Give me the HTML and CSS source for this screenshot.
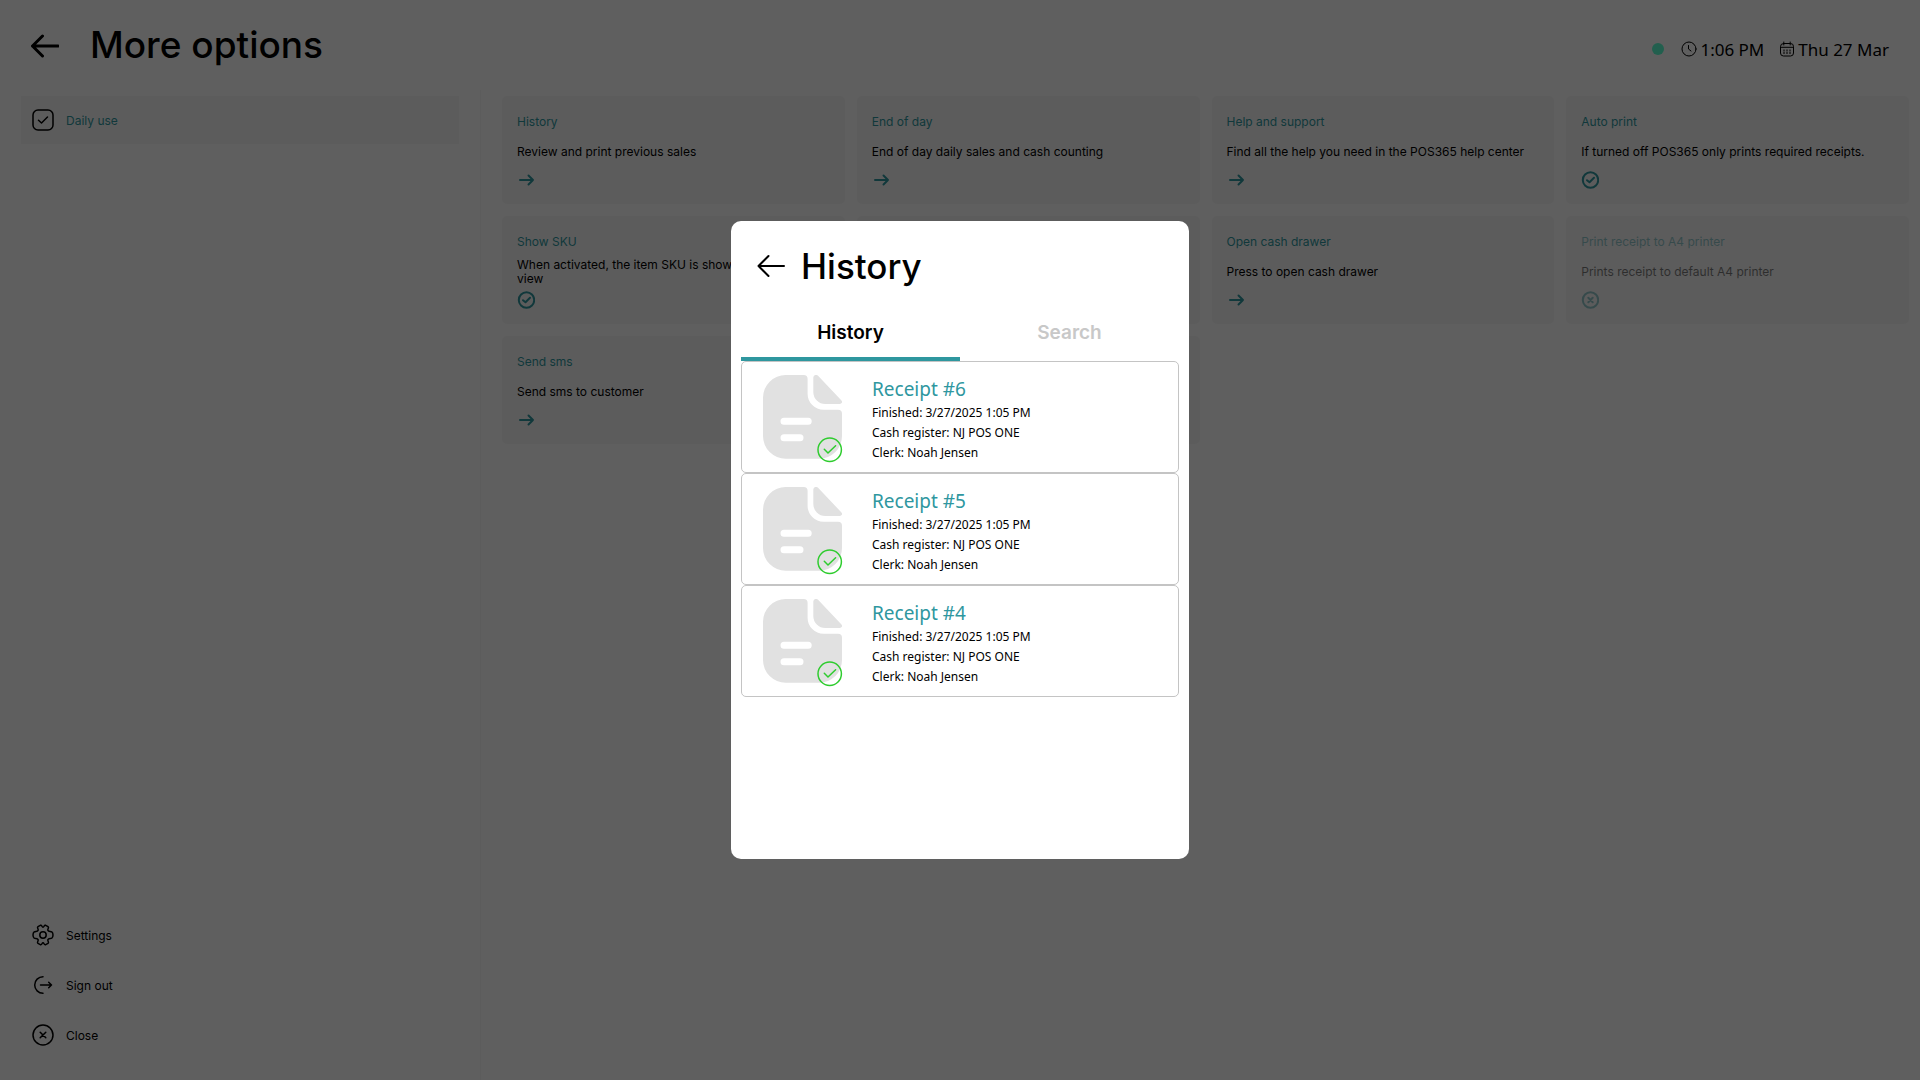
FILE: index.html
```html
<!DOCTYPE html>
<html lang="en">
<head>
    <meta charset="UTF-8">
    <meta name="viewport" content="width=device-width, initial-scale=1.0">
    <title>More options</title>
    <link rel="stylesheet" href="styles.css">
</head>
<body>
    <!-- shared icons -->
    <svg class="sprite" aria-hidden="true">
        <symbol id="back" viewBox="0 0 28 24">
            <path d="M27 12H1.500M11.500 2 1.500 12l10 10"/>
        </symbol>
        <symbol id="arrow" viewBox="0 0 18 18">
            <path d="M3 9h13M11.500 4.500 16 9l-4.500 4.500"/>
        </symbol>
        <symbol id="check" viewBox="0 0 18 18">
            <circle cx="9.500" cy="9" r="7.700"/>
            <path d="M6 9.200 8.500 11.300l4.500-4.500"/>
        </symbol>
        <symbol id="cross" viewBox="0 0 18 18">
            <circle cx="9.500" cy="9" r="7.700"/>
            <path d="M7.300 6.800l4.400 4.400M11.700 6.800l-4.400 4.400"/>
        </symbol>
        <symbol id="receipt" viewBox="0 0 80 88">
            <path class="paper" d="M22.700 0H40.600a4 4 0 0 1 4 4V18.700a16 16 0 0 0 16 16H75a4 4 0 0 1 4 4V61a22.700 22.700 0 0 1-22.700 22.700H22.700A22.700 22.700 0 0 1 0 61V22.700A22.700 22.700 0 0 1 22.700 0z"/>
            <path class="paper" d="M50.300 3c0-3 3-4 5-2L78 25c2 2 1 4-1.500 4H62.300a12 12 0 0 1-12-12z"/>
            <path class="line" d="M21 46.200h24.200M21 62.800h16"/>
            <circle class="done" cx="66.700" cy="74.700" r="11.700"/>
            <path class="done" d="M61.300 74.300l3.700 3.700 7.600-7.200"/>
        </symbol>
    </svg>

    <div class="page">
        <header class="header">
            <button class="back" aria-label="Back"><svg><use href="#back"/></svg></button>
            <h1>More options</h1>
            <div class="status">
                <span class="dot"></span>
                <span class="info">
                    <svg viewBox="0 0 16 16"><circle cx="8" cy="8" r="7"/><path d="M7.500 4.500V8l2.500 2"/></svg>
                    1:06 PM
                </span>
                <span class="info">
                    <svg viewBox="0 0 16 16"><rect x="1.500" y="2.500" width="13" height="12.500" rx="3"/><path d="M1.500 6.300h13M4.800 1v3M11.200 1v3"/><path class="days" d="M4.500 9.500h7M4.500 12h7"/></svg>
                    Thu 27 Mar
                </span>
            </div>
        </header>

        <div class="main">
            <nav class="sidebar">
                <button class="item active">
                    <svg viewBox="0 0 22 22"><rect x="1" y="1" width="20" height="20" rx="5"/><path d="M6.500 11.300 9.500 14l6-6"/></svg>
                    Daily use
                </button>
                <div class="bottom">
                    <button class="item">
                        <svg viewBox="0 0 22 22"><path d="M8.300 1.300C10.200.7 9.700 3.200 11 3.200S11.800.7 13.700 1.300L16 2.600C17.600 3.900 15.200 5 15.900 6.300S18.500 7.200 19.800 7.900C21.400 9 21.400 13 19.800 14.100C18.500 14.800 16.600 14.400 15.900 15.700S17.600 18.100 16 19.400L13.700 20.700C11.800 21.300 12.300 18.800 11 18.800S10.200 21.300 8.300 20.700L6 19.400C4.400 18.100 6.800 17 6.100 15.700S3.500 14.800 2.200 14.100C.6 13 .6 9 2.200 7.900C3.500 7.200 5.400 7.600 6.100 6.300S4.400 3.900 6 2.600z"/><circle cx="11" cy="11" r="3.200"/></svg>
                        Settings
                    </button>
                    <button class="item">
                        <svg viewBox="0 0 22 22"><path d="M11 2.700a8.300 8.300 0 0 0 0 16.600M8.500 11h11M16.700 8.200 19.500 11l-2.800 2.800"/></svg>
                        Sign out
                    </button>
                    <button class="item">
                        <svg viewBox="0 0 22 22"><circle cx="11" cy="11" r="10"/><path d="M8.200 8.200l5.600 5.600M13.800 8.200l-5.600 5.600"/></svg>
                        Close
                    </button>
                </div>
            </nav>

            <main class="cards">
                <button class="card">
                    <span class="title">History</span>
                    <span class="text">Review and print previous sales</span>
                    <svg><use href="#arrow"/></svg>
                </button>
                <button class="card">
                    <span class="title">End of day</span>
                    <span class="text">End of day daily sales and cash counting</span>
                    <svg><use href="#arrow"/></svg>
                </button>
                <button class="card">
                    <span class="title">Help and support</span>
                    <span class="text">Find all the help you need in the POS365 help center</span>
                    <svg><use href="#arrow"/></svg>
                </button>
                <button class="card">
                    <span class="title">Auto print</span>
                    <span class="text">If turned off POS365 only prints required receipts.</span>
                    <svg><use href="#check"/></svg>
                </button>
                <button class="card">
                    <span class="title">Show SKU</span>
                    <span class="text">When activated, the item SKU is shown<br>view</span>
                    <svg><use href="#check"/></svg>
                </button>
                <div class="card"></div>
                <button class="card">
                    <span class="title">Open cash drawer</span>
                    <span class="text">Press to open cash drawer</span>
                    <svg><use href="#arrow"/></svg>
                </button>
                <button class="card" disabled>
                    <span class="title">Print receipt to A4 printer</span>
                    <span class="text">Prints receipt to default A4 printer</span>
                    <svg><use href="#cross"/></svg>
                </button>
                <button class="card">
                    <span class="title">Send sms</span>
                    <span class="text">Send sms to customer</span>
                    <svg><use href="#arrow"/></svg>
                </button>
                <div class="card"></div>
            </main>
        </div>
    </div>

    <div class="overlay">
        <section class="modal" role="dialog" aria-labelledby="modal-title">
            <div class="modal-header">
                <button class="back" aria-label="Back"><svg><use href="#back"/></svg></button>
                <h2 id="modal-title">History</h2>
            </div>
            <div class="tabs" role="tablist">
                <button class="tab active" role="tab" aria-selected="true">History</button>
                <button class="tab" role="tab" aria-selected="false">Search</button>
            </div>
            <div class="receipts">
                <button class="receipt">
                    <svg><use href="#receipt"/></svg>
                    <span class="details">
                        <span class="number">Receipt #6</span>
                        <span>Finished: 3/27/2025 1:05 PM</span>
                        <span>Cash register: NJ POS ONE</span>
                        <span>Clerk: Noah Jensen</span>
                    </span>
                </button>
                <button class="receipt">
                    <svg><use href="#receipt"/></svg>
                    <span class="details">
                        <span class="number">Receipt #5</span>
                        <span>Finished: 3/27/2025 1:05 PM</span>
                        <span>Cash register: NJ POS ONE</span>
                        <span>Clerk: Noah Jensen</span>
                    </span>
                </button>
                <button class="receipt">
                    <svg><use href="#receipt"/></svg>
                    <span class="details">
                        <span class="number">Receipt #4</span>
                        <span>Finished: 3/27/2025 1:05 PM</span>
                        <span>Cash register: NJ POS ONE</span>
                        <span>Clerk: Noah Jensen</span>
                    </span>
                </button>
            </div>
        </section>
    </div>
</body>
</html>
```
FILE: styles.css
```css
* {
    box-sizing: border-box;
}
body {
    margin: 0;
    font-family: Inter, "Liberation Sans", sans-serif;
    font-size: 12px;
    color: #000;
    background: #fff;
}
button {
    margin: 0;
    padding: 0;
    border: none;
    background: none;
    font: inherit;
    color: inherit;
    text-align: left;
    cursor: pointer;
}
svg {
    display: block;
    flex-shrink: 0;
    fill: none;
    stroke: currentColor;
    stroke-width: 1.5;
    stroke-linecap: round;
    stroke-linejoin: round;
}
h1, h2 {
    margin: 0;
    font-weight: 500;
    line-height: 44px;
}
h1 {
    font-size: 37px;
}
h2 {
    font-size: 35px;
}
.sprite {
    position: absolute;
    width: 0;
    height: 0;
}
.page {
    display: flex;
    flex-direction: column;
    min-height: 100vh;
}

/* header */
.header {
    display: flex;
    align-items: center;
    height: 90px;
    padding: 0 31px;
}
.header h1 {
    margin-left: 31px;
}
.back svg {
    width: 28px;
    height: 24px;
    stroke-width: 2;
}
.header .back {
    padding-top: 2px;
}
.header .back svg {
    stroke-width: 3;
}
.status {
    display: flex;
    align-items: center;
    gap: 15px;
    margin-left: auto;
    padding-top: 8px;
    font-family: "Noto Sans", sans-serif;
    font-size: 17px;
}
.dot {
    width: 12px;
    height: 12px;
    margin-right: 2px;
    border-radius: 50%;
    background: #5cffd0;
}
.info {
    display: flex;
    align-items: center;
    gap: 3px;
}
.info svg {
    width: 16px;
    height: 16px;
    stroke-width: 1;
}
.info .days {
    stroke-dasharray: 1 2;
    stroke-linecap: butt;
    stroke-width: 2;
}

/* sidebar */
.main {
    display: flex;
    flex: 1;
}
.sidebar {
    display: flex;
    flex-direction: column;
    width: 25%;
    padding: 6px 21px 20px;
}
.item {
    display: flex;
    align-items: center;
    gap: 12px;
    width: 100%;
    height: 50px;
    padding: 0 11px;
}
.item.active {
    height: 48px;
    background: #f7f7f7;
    color: #2f979f;
}
.item svg {
    width: 22px;
    height: 22px;
    color: #000;
}
.bottom {
    margin-top: auto;
}

/* cards */
.cards {
    flex: 1;
    display: grid;
    grid-template-columns: repeat(4, 1fr);
    grid-auto-rows: 108px;
    gap: 12px;
    padding: 6px 11px 12px 21px;
    border-left: 1px solid #f7f7f7;
}
.card {
    display: grid;
    grid-template-rows: 21px 39px 18px;
    align-items: center;
    padding: 15px;
    border-radius: 5px;
    background: #f7f7f7;
    line-height: 14px;
}
.card .title {
    color: #2f979f;
}
.card svg {
    width: 18px;
    height: 18px;
    color: #2f979f;
    stroke-width: 2;
}
.card:disabled .title,
.card:disabled .text,
.card:disabled svg {
    opacity: 0.5;
}

/* history modal */
.overlay {
    position: fixed;
    inset: 0;
    display: flex;
    align-items: center;
    justify-content: center;
    background: rgba(0, 0, 0, 0.627);
}
.modal {
    width: 458px;
    max-width: 100%;
    min-height: 638px;
    padding: 0 10px 10px;
    border-radius: 10px;
    background: #fff;
}
.modal-header {
    display: flex;
    align-items: center;
    gap: 16px;
    height: 90px;
    padding: 0 16px;
}
.tabs {
    display: flex;
}
.tab {
    flex: 1;
    height: 50px;
    padding-bottom: 4px;
    border-bottom: 4px solid transparent;
    font-size: 19px;
    font-weight: 600;
    text-align: center;
    color: #c8c8c8;
}
.tab.active {
    border-color: #2f979f;
    color: #000;
}
.receipt {
    display: flex;
    align-items: center;
    gap: 29px;
    width: 100%;
    height: 112px;
    padding: 4px 20px 0 21px;
    border: 1px solid #c4c4c4;
    border-radius: 5px;
}
.receipt svg {
    width: 80px;
    height: 88px;
}
.paper {
    fill: #e1e1e1;
    stroke: none;
}
.line {
    stroke: #fff;
    stroke-width: 7;
}
.done {
    stroke: #2ecc2e;
}
.details {
    display: flex;
    flex-direction: column;
    font-family: "Noto Sans", sans-serif;
    line-height: 20px;
}
.number {
    font-size: 19px;
    line-height: 28px;
    color: #2f979f;
}
```
